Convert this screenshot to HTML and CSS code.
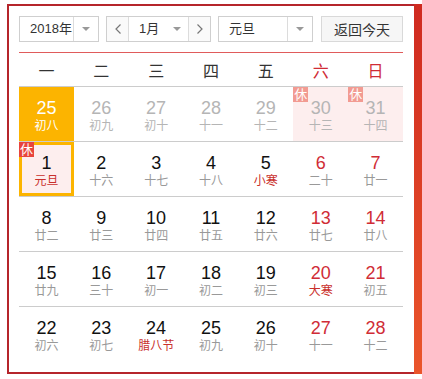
FILE: index.html
```html
<!DOCTYPE html>
<html lang="zh-CN">
<head>
    <meta charset="UTF-8">
    <meta name="viewport" content="width=device-width, initial-scale=1.0">
    <title>万年历</title>
    <link rel="stylesheet" href="styles.css">
</head>
<body>
    <div class="frame">
        <div class="panel">
            <!-- barre de sélection -->
            <div class="toolbar">
                <div class="select year">
                    <span class="val">2018年</span>
                    <span class="arrow"><i class="tri"></i></span>
                </div>
                <div class="month">
                    <span class="step">
                        <svg width="6" height="10" viewBox="0 0 6 10"><polyline points="5.5,0.5 1,5 5.5,9.5" fill="none" stroke="#777" stroke-width="1.2"/></svg>
                    </span>
                    <span class="mval">1月<span class="marrow"><i class="tri"></i></span></span>
                    <span class="step next">
                        <svg width="6" height="10" viewBox="0 0 6 10"><polyline points="0.5,0.5 5,5 0.5,9.5" fill="none" stroke="#777" stroke-width="1.2"/></svg>
                    </span>
                </div>
                <div class="select holiday">
                    <span class="val">元旦</span>
                    <span class="arrow"><i class="tri"></i></span>
                </div>
                <button class="today">返回今天</button>
            </div>

            <div class="weekdays">
                <span>一</span><span>二</span><span>三</span><span>四</span><span>五</span>
                <span class="red">六</span><span class="red">日</span>
            </div>

            <!-- semaine 1 -->
            <div class="week">
                <div class="day current"><b>25</b><small>初八</small></div>
                <div class="day other"><b>26</b><small>初九</small></div>
                <div class="day other"><b>27</b><small>初十</small></div>
                <div class="day other"><b>28</b><small>十一</small></div>
                <div class="day other"><b>29</b><small>十二</small></div>
                <div class="day other rest"><em class="tag soft">休</em><b>30</b><small>十三</small></div>
                <div class="day other rest"><em class="tag soft">休</em><b>31</b><small>十四</small></div>
            </div>

            <!-- semaine 2 -->
            <div class="week">
                <div class="day rest selected"><em class="tag">休</em><b>1</b><small class="fest">元旦</small></div>
                <div class="day"><b>2</b><small>十六</small></div>
                <div class="day"><b>3</b><small>十七</small></div>
                <div class="day"><b>4</b><small>十八</small></div>
                <div class="day"><b>5</b><small class="fest">小寒</small></div>
                <div class="day weekend"><b>6</b><small>二十</small></div>
                <div class="day weekend"><b>7</b><small>廿一</small></div>
            </div>

            <!-- semaine 3 -->
            <div class="week">
                <div class="day"><b>8</b><small>廿二</small></div>
                <div class="day"><b>9</b><small>廿三</small></div>
                <div class="day"><b>10</b><small>廿四</small></div>
                <div class="day"><b>11</b><small>廿五</small></div>
                <div class="day"><b>12</b><small>廿六</small></div>
                <div class="day weekend"><b>13</b><small>廿七</small></div>
                <div class="day weekend"><b>14</b><small>廿八</small></div>
            </div>

            <!-- semaine 4 -->
            <div class="week">
                <div class="day"><b>15</b><small>廿九</small></div>
                <div class="day"><b>16</b><small>三十</small></div>
                <div class="day"><b>17</b><small>初一</small></div>
                <div class="day"><b>18</b><small>初二</small></div>
                <div class="day"><b>19</b><small>初三</small></div>
                <div class="day weekend"><b>20</b><small class="fest">大寒</small></div>
                <div class="day weekend"><b>21</b><small>初五</small></div>
            </div>

            <!-- semaine 5 -->
            <div class="week">
                <div class="day"><b>22</b><small>初六</small></div>
                <div class="day"><b>23</b><small>初七</small></div>
                <div class="day"><b>24</b><small class="fest">腊八节</small></div>
                <div class="day"><b>25</b><small>初九</small></div>
                <div class="day"><b>26</b><small>初十</small></div>
                <div class="day weekend"><b>27</b><small>十一</small></div>
                <div class="day weekend"><b>28</b><small>十二</small></div>
            </div>
        </div>
        <div class="edge"></div>
    </div>
</body>
</html>
```

FILE: styles.css
```css
body {
    margin: 0;
    font-family: "Liberation Sans", "Noto Sans CJK SC", sans-serif;
    background-color: #fff;
    color: #111;
}

.frame {
    display: flex;
    margin: 4px 0 0 7px;
    height: 370px;
}

.panel {
    box-sizing: border-box;
    width: 407px;
    height: 370px;
    padding: 10px 11px 0 10px;
    border: 2px solid #b5252b;
    border-right: 0;
}

.edge {
    width: 8px;
    background: linear-gradient(#cf2a20, #ea552b);
}

/* barre du haut */
.toolbar {
    display: flex;
    align-items: center;
    height: 26px;
    padding-bottom: 10px;
    border-bottom: 1px solid #e05b5b;
    font-size: 13px;
    color: #333;
}

.select {
    box-sizing: border-box;
    display: flex;
    height: 26px;
    border: 1px solid #cfcfcf;
    background-color: #fff;
}

.select .val {
    flex: 1;
    padding-left: 10px;
    line-height: 24px;
    white-space: nowrap;
}

.select .arrow {
    width: 24px;
    border-left: 1px solid #dcdcdc;
    display: flex;
    align-items: center;
    justify-content: center;
}

.tri {
    width: 0;
    height: 0;
    border-left: 4px solid transparent;
    border-right: 4px solid transparent;
    border-top: 4px solid #999;
}

.year {
    width: 80px;
}

.month {
    box-sizing: border-box;
    display: flex;
    width: 105px;
    height: 26px;
    margin-left: 7px;
    border: 1px solid #cfcfcf;
}

.month .step {
    width: 21px;
    display: flex;
    align-items: center;
    justify-content: center;
    background-color: #fafafa;
    border-right: 1px solid #dcdcdc;
}

.month .step.next {
    border-right: 0;
    border-left: 1px solid #dcdcdc;
}

.month .mval {
    flex: 1;
    display: flex;
    padding-left: 10px;
    line-height: 24px;
    white-space: nowrap;
}

.month .marrow {
    margin-left: auto;
    width: 22px;
    display: flex;
    align-items: center;
    justify-content: center;
}

.holiday {
    width: 95px;
    margin-left: 7px;
}

.today {
    box-sizing: border-box;
    margin-left: auto;
    width: 82px;
    height: 26px;
    padding: 0;
    border: 1px solid #d9d9d9;
    background-color: #f6f6f6;
    font-family: inherit;
    font-size: 14px;
    color: #333;
}

/* jours de la semaine */
.weekdays {
    display: grid;
    grid-template-columns: repeat(7, 1fr);
    align-items: center;
    height: 33px;
    text-align: center;
    font-size: 16px;
    color: #333;
}

.weekdays .red {
    color: #d02c36;
}

/* grille */
.week {
    box-sizing: border-box;
    display: grid;
    grid-template-columns: repeat(7, 1fr);
    height: 55px;
    border-top: 1px solid #cccccc;
}

.day {
    position: relative;
    display: flex;
    flex-direction: column;
    align-items: center;
    padding-top: 11px;
}

.day b {
    font-weight: normal;
    font-size: 18px;
    line-height: 20px;
    color: #111;
}

.day small {
    font-size: 12px;
    line-height: 17px;
    color: #999;
}

.day.other b,
.day.other small {
    color: #b5b5b5;
}

.day.weekend b {
    color: #d02c36;
}

.day small.fest {
    color: #c9302c;
}

.day.rest {
    background-color: #fdeeee;
}

.day.current {
    background-color: #fcb400;
}

.day.current b,
.day.current small {
    color: #fff;
}

.day.selected {
    box-shadow: inset 0 0 0 3px #fcb400;
}

.tag {
    position: absolute;
    left: 0;
    top: 0;
    width: 15px;
    height: 15px;
    font-style: normal;
    font-size: 13px;
    line-height: 15px;
    text-align: center;
    color: #fff;
    background-color: #e8453c;
}

.tag.soft {
    background-color: #f29b92;
}
```
